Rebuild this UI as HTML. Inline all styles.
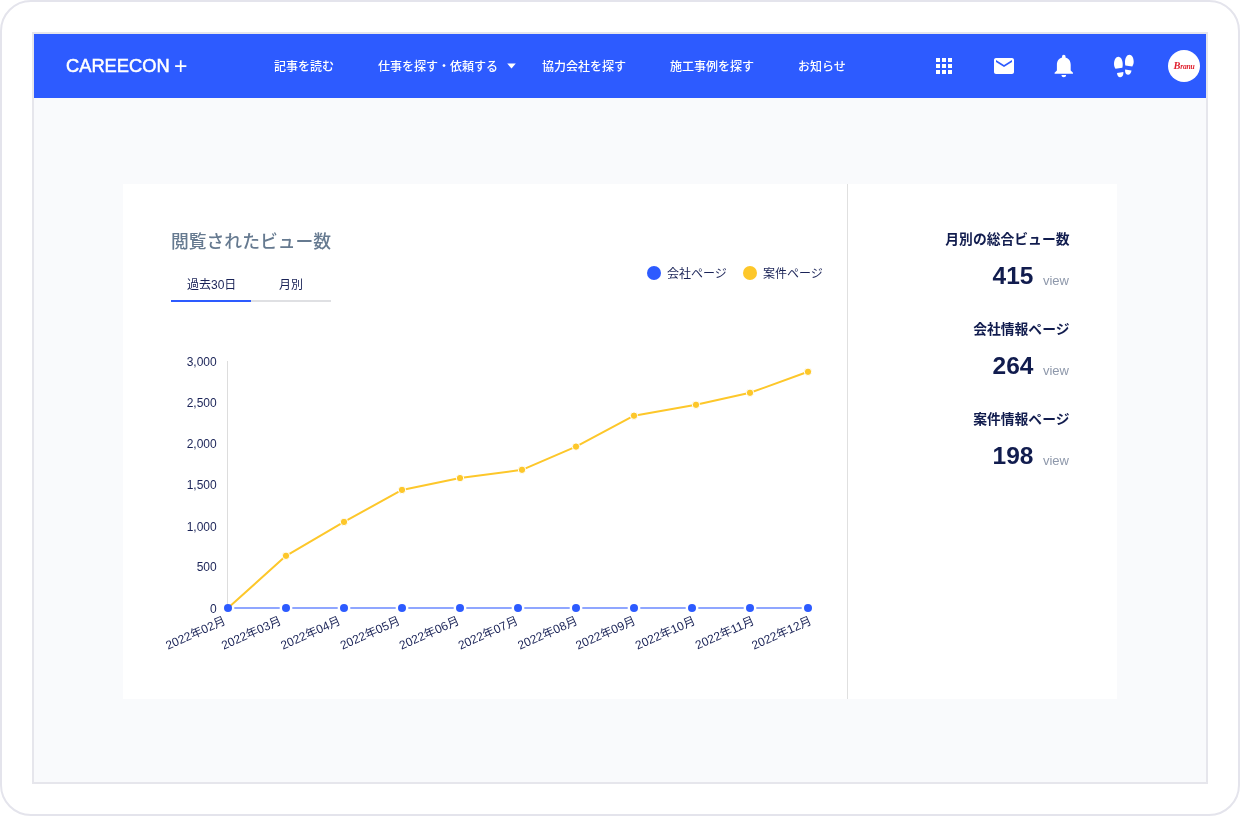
<!DOCTYPE html>
<html lang="ja">
<head>
<meta charset="utf-8">
<title>CAREECON +</title>
<style>
*{box-sizing:border-box;margin:0;padding:0}
html,body{width:1240px;height:816px;overflow:hidden;background:#fff}
body{will-change:transform;font-family:"Liberation Sans","Noto Sans CJK JP",sans-serif;color:#1a2357;position:relative}
.abs{position:absolute}
#frame{left:0;top:0;width:1240px;height:816px;border:2px solid #e4e4ec;border-radius:31px;background:#fff}
#screen{left:32px;top:32px;width:1176px;height:752px;border:2px solid #e6e6ec;background:#f9fafc}
#nav{left:34px;top:34px;width:1172px;height:64px;background:#2d5bff}
#logo{left:66px;top:54px;font-size:18.3px;line-height:24px;color:#fff;letter-spacing:0;white-space:nowrap;-webkit-text-stroke:.5px #fff}
#plus{left:174px;top:51px;font-size:23px;line-height:30px;color:#fff;font-weight:400}
.nl{top:59px;font-size:12px;line-height:16px;color:#fff;font-weight:500;white-space:nowrap;letter-spacing:0}
#card{left:123px;top:184px;width:994px;height:515px;background:#fff}
#divider{left:847px;top:184px;width:1px;height:515px;background:#e0e0e0}
#title{left:171px;top:230px;font-size:17.8px;line-height:24px;font-weight:500;color:#667a90;letter-spacing:0;white-space:nowrap}
.tab{top:277px;font-size:12px;line-height:16px;color:#1a2357;white-space:nowrap}
.leg{top:266px;font-size:12px;line-height:16px;color:#1a2357;white-space:nowrap}
.dot{width:14px;height:14px;border-radius:50%}
.sl{right:170.5px;font-size:13.8px;line-height:18px;font-weight:700;color:#111c4e;white-space:nowrap;letter-spacing:0}
.sv{right:206.5px;font-size:24.5px;line-height:30px;font-weight:700;color:#111c4e;white-space:nowrap;font-family:"Liberation Sans","Noto Sans CJK JP",sans-serif}
.su{right:171px;font-size:13px;line-height:16px;color:#8e98ab;white-space:nowrap}
svg text{font-family:"Liberation Sans","Noto Sans CJK JP",sans-serif}
</style>
</head>
<body>
<div id="frame" class="abs"></div>
<div id="screen" class="abs"></div>
<div id="nav" class="abs"></div>
<div id="logo" class="abs">CAREECON</div><div id="plus" class="abs">+</div>
<div class="abs nl" style="left:274px">記事を読む</div>
<div class="abs nl" style="left:378px">仕事を探す・依頼する</div>
<svg class="abs" style="left:506px;top:62px" width="12" height="8" viewBox="506 62 12 8"><path d="M507.2 63.5h8.6L511.5 68.6z" fill="#fff"/></svg>
<div class="abs nl" style="left:542px">協力会社を探す</div>
<div class="abs nl" style="left:670px">施工事例を探す</div>
<div class="abs nl" style="left:798px">お知らせ</div>

<svg class="abs" style="left:932px;top:54px" width="24" height="24" viewBox="0 0 24 24"><path fill="#fff" d="M4 8h4V4H4v4zm6 12h4v-4h-4v4zm-6 0h4v-4H4v4zm0-6h4v-4H4v4zm6 0h4v-4h-4v4zm6-10v4h4V4h-4zm-6 4h4V4h-4v4zm6 6h4v-4h-4v4zm0 6h4v-4h-4v4z"/></svg>
<svg class="abs" style="left:992px;top:54px" width="24" height="24" viewBox="0 0 24 24"><path fill="#fff" d="M20 4H4c-1.1 0-1.99.9-1.99 2L2 18c0 1.1.9 2 2 2h16c1.1 0 2-.9 2-2V6c0-1.1-.9-2-2-2zm0 4l-8 5-8-5V6l8 5 8-5v2z"/></svg>
<svg class="abs" style="left:1050.2px;top:52px" width="27.6" height="27.6" viewBox="0 0 24 24"><path fill="#fff" d="M12 22c1.1 0 2-.9 2-2h-4c0 1.1.89 2 2 2zm6-6v-5c0-3.07-1.64-5.64-4.5-6.32V4c0-.83-.67-1.5-1.5-1.5s-1.5.67-1.5 1.5v.68C7.63 5.36 6 7.92 6 11v5l-2 2v1h16v-1l-2-2z"/></svg>
<svg class="abs" style="left:1112px;top:52px" width="24" height="28" viewBox="1112 52 24 28"><g fill="#fff">
<path d="M1118.4 56.8c2.6 0 4.3 3.600 4.300 7.600 0 1.500-.15 2.500-.4 3.400l-6.800 1c-1-1.400-1.500-2.900-1.500-4.800 0-4 1.800-7.200 4.400-7.200z"/>
<path d="M1117 72.9l6.400-1c.2 3-.9 5.100-3 5.300-2 .2-3.200-1.600-3.400-4.300z"/>
<path d="M1129.4 54.8c-2.6 0-4.4 3.4-4.4 7.4 0 1.400.1 2.400.3 3.200l7 1c.9-1.400 1.400-2.700 1.400-4.600 0-4-1.700-7-4.300-7z"/>
<path d="M1125.100 69.400l6.400 1c-.3 2.700-1.700 4.500-3.700 4.300-2-.2-3-2.300-2.700-5.300z"/>
</g></svg>
<div class="abs" style="left:1168px;top:50px;width:32px;height:32px;border-radius:50%;background:#fff"></div>
<div class="abs" style="left:1168px;top:59px;width:32px;text-align:center;font-family:'Liberation Serif',serif;font-style:italic;font-weight:700;font-size:7.6px;line-height:14px;color:#e0212f;letter-spacing:-.2px;white-space:nowrap"><span style="font-size:10.4px">B</span>ranu</div>

<div id="card" class="abs"></div>
<div id="divider" class="abs"></div>
<div id="title" class="abs">閲覧されたビュー数</div>
<div class="abs tab" style="left:187px">過去30日</div>
<div class="abs tab" style="left:279px">月別</div>
<div class="abs" style="left:171px;top:300px;width:160px;height:2px;background:#dfe0e3"></div>
<div class="abs" style="left:171px;top:300px;width:80px;height:2px;background:#2d5bff"></div>

<div class="abs dot" style="left:647px;top:266px;background:#2d5bff"></div>
<div class="abs leg" style="left:667px">会社ページ</div>
<div class="abs dot" style="left:743px;top:266px;background:#fdc72a"></div>
<div class="abs leg" style="left:763px">案件ページ</div>

<div class="abs sl" style="top:231px">月別の総合ビュー数</div>
<div class="abs sv" style="top:261px">415</div>
<div class="abs su" style="top:273px">view</div>
<div class="abs sl" style="top:321px">会社情報ページ</div>
<div class="abs sv" style="top:351px">264</div>
<div class="abs su" style="top:363px">view</div>
<div class="abs sl" style="top:411px">案件情報ページ</div>
<div class="abs sv" style="top:441px">198</div>
<div class="abs su" style="top:453px">view</div>

<svg id="chart" class="abs" style="left:123px;top:340px" width="724" height="340" viewBox="123 340 724 340">
<line x1="227.5" y1="361" x2="227.5" y2="608" stroke="#dddddd" stroke-width="1"/>
<g font-size="12" fill="#1a2357" text-anchor="end">
<text x="216.7" y="366">3,000</text>
<text x="216.7" y="407">2,500</text>
<text x="216.7" y="448">2,000</text>
<text x="216.7" y="489">1,500</text>
<text x="216.7" y="531">1,000</text>
<text x="216.7" y="571">500</text>
<text x="216.7" y="613">0</text>
</g>
<polyline fill="none" stroke="#fdc72a" stroke-width="2" stroke-linejoin="round" points="228,608 286,555.8 344,521.9 402,489.9 460,478.1 522,469.8 576,446.6 634,415.7 696,404.8 750,392.8 808,371.8"/>
<g fill="#fdc72a" stroke="#fff" stroke-width="1">
<circle cx="286" cy="555.8" r="3.7"/><circle cx="344" cy="521.9" r="3.7"/><circle cx="402" cy="489.9" r="3.7"/><circle cx="460" cy="478.1" r="3.7"/><circle cx="522" cy="469.8" r="3.7"/><circle cx="576" cy="446.6" r="3.7"/><circle cx="634" cy="415.7" r="3.7"/><circle cx="696" cy="404.8" r="3.7"/><circle cx="750" cy="392.8" r="3.7"/><circle cx="808" cy="371.8" r="3.7"/>
</g>
<g stroke="#8fa6ff" stroke-width="2">
<line x1="234.3" y1="608" x2="279.7" y2="608"/><line x1="292.3" y1="608" x2="337.7" y2="608"/><line x1="350.3" y1="608" x2="395.7" y2="608"/><line x1="408.3" y1="608" x2="453.7" y2="608"/><line x1="466.3" y1="608" x2="511.7" y2="608"/><line x1="524.3" y1="608" x2="569.7" y2="608"/><line x1="582.3" y1="608" x2="627.7" y2="608"/><line x1="640.3" y1="608" x2="685.7" y2="608"/><line x1="698.3" y1="608" x2="743.7" y2="608"/><line x1="756.3" y1="608" x2="801.7" y2="608"/>
</g>
<g fill="#2d5bff">
<circle cx="228" cy="608" r="4"/><circle cx="286" cy="608" r="4"/><circle cx="344" cy="608" r="4"/><circle cx="402" cy="608" r="4"/><circle cx="460" cy="608" r="4"/><circle cx="518" cy="608" r="4"/><circle cx="576" cy="608" r="4"/><circle cx="634" cy="608" r="4"/><circle cx="692" cy="608" r="4"/><circle cx="750" cy="608" r="4"/><circle cx="808" cy="608" r="4"/>
</g>
<g font-size="12" fill="#1a2357" text-anchor="end">
<text transform="translate(226.5,623.7) rotate(-24)">2022年02月</text>
<text transform="translate(282.2,623.7) rotate(-24)">2022年03月</text>
<text transform="translate(341.5,623.7) rotate(-24)">2022年04月</text>
<text transform="translate(401,623.7) rotate(-24)">2022年05月</text>
<text transform="translate(460.1,623.7) rotate(-24)">2022年06月</text>
<text transform="translate(518.9,623.7) rotate(-24)">2022年07月</text>
<text transform="translate(578.5,623.7) rotate(-24)">2022年08月</text>
<text transform="translate(636.5,623.7) rotate(-24)">2022年09月</text>
<text transform="translate(696.1,623.7) rotate(-24)">2022年10月</text>
<text transform="translate(755.3,623.7) rotate(-24)">2022年11月</text>
<text transform="translate(812.5,623.7) rotate(-24)">2022年12月</text>
</g>
</svg>
</body>
</html>
